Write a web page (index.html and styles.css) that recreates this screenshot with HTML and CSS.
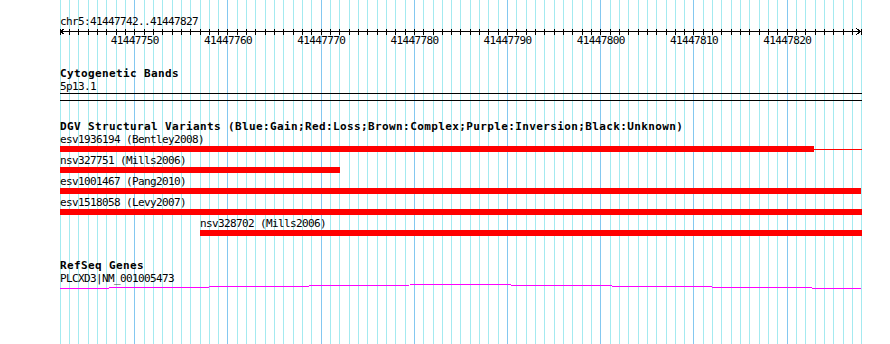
FILE: index.html
```html
<!DOCTYPE html>
<html lang="en">
<head>
    <meta charset="UTF-8">
    <meta name="viewport" content="width=device-width, initial-scale=1.0">
    <title>chr5:41447742..41447827</title>
    <link rel="stylesheet" href="styles.css">
</head>
<body>
    <div class="browser">
        <svg class="grid" id="grid" width="890" height="344"></svg>

        <div class="tracks">
            <div class="locus">chr5:41447742..41447827</div>
            <svg class="ruler" id="ruler" width="810" height="20">
                <line class="axis" x1="0" y1="3.5" x2="801" y2="3.5"/>
                <polyline class="axis" points="4.5,0.5 0.5,3.5 4.5,6.5"/>
                <polyline class="axis" points="796.5,0.5 800.5,3.5 796.5,6.5"/>
                <text x="74.8" y="16">41447750</text>
                <text x="168" y="16">41447760</text>
                <text x="261.2" y="16">41447770</text>
                <text x="354.4" y="16">41447780</text>
                <text x="447.6" y="16">41447790</text>
                <text x="540.8" y="16">41447800</text>
                <text x="634" y="16">41447810</text>
                <text x="727.2" y="16">41447820</text>
            </svg>

            <section class="track track-bands">
                <h2 class="track-title">Cytogenetic Bands</h2>
                <div class="feature-label band-label">5p13.1</div>
                <div class="band"></div>
            </section>

            <section class="track track-dgv">
                <h2 class="track-title">DGV Structural Variants (Blue:Gain;Red:Loss;Brown:Complex;Purple:Inversion;Black:Unknown)</h2>
                <div class="sv-list">
                    <div class="sv">
                        <div class="feature-label">esv1936194 (Bentley2008)</div>
                        <div class="sv-bar">
                            <span class="sv-thick" style="width: 754px"></span>
                            <span class="sv-thin" style="width: 48px"></span>
                        </div>
                    </div>
                    <div class="sv">
                        <div class="feature-label">nsv327751 (Mills2006)</div>
                        <div class="sv-bar"><span class="sv-thick" style="width: 280px"></span></div>
                    </div>
                    <div class="sv">
                        <div class="feature-label">esv1001467 (Pang2010)</div>
                        <div class="sv-bar"><span class="sv-thick" style="width: 801px"></span></div>
                    </div>
                    <div class="sv">
                        <div class="feature-label">esv1518058 (Levy2007)</div>
                        <div class="sv-bar"><span class="sv-thick" style="width: 802px"></span></div>
                    </div>
                    <div class="sv" style="margin-left: 140px">
                        <div class="feature-label">nsv328702 (Mills2006)</div>
                        <div class="sv-bar"><span class="sv-thick" style="width: 662px"></span></div>
                    </div>
                </div>
            </section>

            <section class="track track-genes">
                <h2 class="track-title">RefSeq Genes</h2>
                <div class="feature-label gene-label">PLCXD3|NM_001005473</div>
                <svg class="gene" width="802" height="6">
                    <polyline points="0,4.5 400.5,0.5 801,4.5"/>
                </svg>
            </section>
        </div>
    </div>

    <script src="grid.js"></script>
</body>
</html>
```

FILE: styles.css
```css
body {
    margin: 0;
    background-color: #ffffff;
}
.browser {
    position: relative;
    width: 890px;
    height: 344px;
    overflow: hidden;
    background-color: #ffffff;
    font-family: "DejaVu Sans Mono", "Liberation Mono", monospace;
    font-size: 11px;
    letter-spacing: -0.62px;
    line-height: 12px;
    color: #000000;
}
.grid {
    position: absolute;
    top: 0;
    left: 0;
}
.grid line {
    stroke-width: 1;
    shape-rendering: crispEdges;
}
.grid .grid-minor {
    stroke: #a4eaf0;
}
.grid .grid-major {
    stroke: #84c8f0;
}
.tracks {
    position: relative;
    padding: 16px 0 0 60px;
}
.locus {
    height: 12px;
}
.ruler {
    display: block;
    overflow: visible;
}
.ruler .axis,
.ruler .tick {
    stroke: #000000;
    stroke-width: 1;
    fill: none;
    shape-rendering: crispEdges;
}
.ruler text {
    font-family: "DejaVu Sans Mono", "Liberation Mono", monospace;
    font-size: 11px;
    letter-spacing: -0.62px;
    text-anchor: middle;
    fill: #000000;
}
.track-bands {
    margin-top: 20px;
}
.track-dgv {
    margin-top: 20px;
}
.track-genes {
    margin-top: 24px;
}
.track-title {
    margin: 0;
    font-size: 11px;
    font-weight: bold;
    letter-spacing: 0.38px;
    line-height: 11px;
    white-space: nowrap;
}
.feature-label {
    height: 12px;
    white-space: nowrap;
}
.band-label {
    margin-top: 2px;
}
.gene-label {
    height: 11px;
    margin-top: 2px;
    line-height: 11px;
}
.band {
    width: 802px;
    height: 6px;
    border-top: 1px solid #000000;
    border-bottom: 1px solid #000000;
}
.sv-list {
    padding-top: 2px;
}
.sv {
    margin-bottom: 3px;
}
.sv-bar {
    display: flex;
    align-items: center;
    height: 6px;
}
.sv-thick {
    height: 6px;
    background-color: #ff0000;
}
.sv-thin {
    height: 1px;
    background-color: #ff0000;
}
.gene {
    display: block;
}
.gene polyline {
    fill: none;
    stroke: #ff00ff;
    stroke-width: 1;
    shape-rendering: crispEdges;
}
```

FILE: grid.js
```js
// one vertical guide per base, darker every 10 bp
const START = 41447742;
const BASES = 86;
const LEFT = 59.7;
const STEP = 9.32;
const NS = "http://www.w3.org/2000/svg";

const grid = document.getElementById("grid");
const ruler = document.getElementById("ruler");

function addLine(svg, x1, y1, x2, y2, cls) {
    const line = document.createElementNS(NS, "line");
    line.setAttribute("x1", x1);
    line.setAttribute("y1", y1);
    line.setAttribute("x2", x2);
    line.setAttribute("y2", y2);
    line.setAttribute("class", cls);
    svg.appendChild(line);
}

for (let k = 0; k <= BASES; k++) {
    const x = Math.round(LEFT + k * STEP) + 0.5;
    const major = (START + k) % 10 === 0;
    addLine(grid, x, 0, x, 344, major ? "grid-major" : "grid-minor");
    addLine(ruler, x - 60, 1, x - 60, 7, "tick");
}
```
